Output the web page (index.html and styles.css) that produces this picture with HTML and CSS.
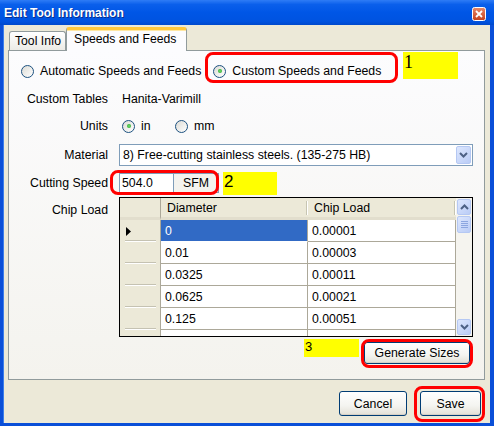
FILE: index.html
```html
<!DOCTYPE html>
<html lang="en">
<head>
    <meta charset="UTF-8">
    <title>Edit Tool Information</title>
    <link rel="stylesheet" href="styles.css">
</head>
<body>
    <div class="window">
        <div class="titlebar">
            <span class="title">Edit Tool Information</span>
            <svg class="close" width="14" height="14" viewBox="0 0 14 14">
                <defs>
                    <linearGradient id="closeBg" x1="0" y1="0" x2="0" y2="1">
                        <stop offset="0" stop-color="#E9896A"/>
                        <stop offset="1" stop-color="#C4401C"/>
                    </linearGradient>
                </defs>
                <rect x="0.5" y="0.5" width="13" height="13" rx="2" fill="url(#closeBg)" stroke="#fff"/>
                <path d="M4 4 L10 10 M10 4 L4 10" stroke="#fff" stroke-width="1.8"/>
            </svg>
        </div>

        <div class="client">
            <div class="tabs">
                <div class="tab">Tool Info</div>
                <div class="tab active">Speeds and Feeds</div>
            </div>

            <div class="panel">
                <div class="mode-row">
                    <label class="radio"><span class="dot"></span>Automatic Speeds and Feeds</label>
                    <label class="radio checked custom"><span class="dot"></span>Custom Speeds and Feeds</label>
                </div>

                <div class="row row-tables">
                    <div class="label">Custom Tables</div>
                    <div class="value text">Hanita-Varimill</div>
                </div>

                <div class="row row-units">
                    <div class="label">Units</div>
                    <div class="value text">
                        <label class="radio checked unit-in"><span class="dot"></span>in</label>
                        <label class="radio"><span class="dot"></span>mm</label>
                    </div>
                </div>

                <div class="row row-material">
                    <div class="label">Material</div>
                    <div class="value">
                        <div class="combo">
                            <span class="combo-text">8) Free-cutting stainless steels. (135-275 HB)</span>
                            <span class="xp-btn combo-btn">
                                <svg width="9" height="6" viewBox="0 0 9 6"><path d="M1 1 L4.5 4.5 L8 1" fill="none" stroke="#4D6185" stroke-width="2"/></svg>
                            </span>
                        </div>
                    </div>
                </div>

                <div class="row row-speed">
                    <div class="label">Cutting Speed</div>
                    <div class="value">
                        <span class="input">504.0</span>
                        <span class="unit">SFM</span>
                    </div>
                </div>

                <div class="row row-grid">
                    <div class="label">Chip Load</div>
                    <div class="value">
                        <div class="grid">
                            <div class="grid-cells">
                                <div class="hcell corner"></div>
                                <div class="hcell">Diameter</div>
                                <div class="hcell">Chip Load</div>

                                <div class="rcell current">
                                    <svg width="5" height="9" viewBox="0 0 5 9"><path d="M0 0 L5 4.5 L0 9 Z" fill="#000"/></svg>
                                </div>
                                <div class="cell selected">0</div>
                                <div class="cell">0.00001</div>

                                <div class="rcell"></div>
                                <div class="cell">0.01</div>
                                <div class="cell">0.00003</div>

                                <div class="rcell"></div>
                                <div class="cell">0.0325</div>
                                <div class="cell">0.00011</div>

                                <div class="rcell"></div>
                                <div class="cell">0.0625</div>
                                <div class="cell">0.00021</div>

                                <div class="rcell"></div>
                                <div class="cell">0.125</div>
                                <div class="cell">0.00051</div>

                                <div class="rcell"></div>
                                <div class="cell"></div>
                                <div class="cell"></div>
                            </div>
                            <div class="scrollbar">
                                <span class="xp-btn sb-btn">
                                    <svg width="9" height="6" viewBox="0 0 9 6"><path d="M1 5 L4.5 1.5 L8 5" fill="none" stroke="#4D6185" stroke-width="2"/></svg>
                                </span>
                                <span class="xp-btn sb-thumb">
                                    <svg width="7" height="7" viewBox="0 0 7 7"><path d="M0 0.5 H7 M0 2.5 H7 M0 4.5 H7 M0 6.5 H7" stroke="#8CA6E0" stroke-width="1"/></svg>
                                </span>
                                <span class="sb-track"></span>
                                <span class="xp-btn sb-btn">
                                    <svg width="9" height="6" viewBox="0 0 9 6"><path d="M1 1 L4.5 4.5 L8 1" fill="none" stroke="#4D6185" stroke-width="2"/></svg>
                                </span>
                            </div>
                        </div>
                    </div>
                </div>

                <div class="gen-row">
                    <button class="button gen">Generate Sizes</button>
                </div>
            </div>

            <div class="footer">
                <button class="button cancel">Cancel</button>
                <button class="button save">Save</button>
            </div>
        </div>

        <!-- annotations drawn over the dialog -->
        <div class="mark ring ring-1"></div>
        <div class="mark ring ring-2"></div>
        <div class="mark ring ring-3"></div>
        <div class="mark ring ring-4"></div>
        <div class="mark note note-1">1</div>
        <div class="mark note note-2">2</div>
        <div class="mark note note-3">3</div>
    </div>
</body>
</html>
```

FILE: styles.css
```css
body { margin: 0; font-family: "Liberation Sans", Arial, sans-serif; font-size: 12.3px; color: #000; }

.window { position: relative; width: 494px; height: 426px; box-sizing: border-box; display: flex; flex-direction: column; background: #0A4FD8; }

.titlebar { height: 25px; flex: none; display: flex; align-items: center; justify-content: space-between; padding: 0 8px 0 4px; background: linear-gradient(#2E7CF6 0%, #0A5FEB 18%, #0056E6 50%, #0053E0 85%, #0049CC 100%); }
.title { color: #fff; font-weight: bold; font-size: 12px; text-shadow: 1px 1px 0 #0A2E8C; }
.close { display: block; margin-top: 3px; }

.client { flex: 1; margin: 0 4px 3px 3px; background: #ECE9D8; display: flex; flex-direction: column; padding: 0 5px 0 4px; border-left: 1px solid #3C7EEB; }

.tabs { height: 25px; display: flex; align-items: flex-end; padding-left: 1px; position: relative; z-index: 1; font-size: 12.2px; }
.tab { height: 19px; box-sizing: border-box; width: 57px; padding: 0 0 1px 5px; display: flex; align-items: center; border: 1px solid #919B9C; border-bottom: none; border-radius: 3px 3px 0 0; background: linear-gradient(#FFFFFF, #ECEBE6); }
.tab.active { height: 24px; width: 121px; margin-bottom: -1px; padding: 0 0 3px 7px; border-top: 3px solid #FFC83C; box-shadow: inset 0 1px 0 #FFE7A2; background: #FCFCFE; }

.panel { height: 330px; box-sizing: border-box; border: 1px solid #919B9C; background: linear-gradient(#FCFCFE, #F4F3EE); padding: 10px 11px 0 0; display: flex; flex-direction: column; }

.mode-row { height: 20px; display: flex; align-items: center; padding-left: 12px; }
.radio { display: inline-flex; align-items: center; gap: 6px; white-space: nowrap; }
.radio .dot { width: 13px; height: 13px; box-sizing: border-box; border-radius: 50%; border: 1px solid #1C5180; background: linear-gradient(135deg, #DCDBD5, #FFFFFF); display: flex; align-items: center; justify-content: center; }
.radio.checked .dot::after { content: ""; width: 4px; height: 4px; border-radius: 50%; background: radial-gradient(#6FE06F, #1E9B1E); }
.radio.custom { margin-left: 12px; }

.row { display: flex; }
.label { width: 99px; flex: none; text-align: right; margin-right: 11px; }
.value { flex: 1; display: flex; align-items: center; }
.value.text { padding-left: 3px; }

.row-tables { height: 20px; margin-top: 8px; align-items: center; }
.row-units { height: 20px; margin-top: 7px; align-items: center; }
.unit-in { width: 53px; }
.row-material { height: 22px; margin-top: 8px; align-items: center; }
.row-speed { height: 20px; margin-top: 7px; align-items: center; }
.row-grid { height: 140px; margin-top: 4px; }
.row-grid .label { padding-top: 6px; }
.row-grid .value { align-items: stretch; }

.combo { flex: 1; height: 22px; box-sizing: border-box; border: 1px solid #7F9DB9; background: #fff; display: flex; align-items: center; justify-content: space-between; padding: 0 1px 0 3px; }

.xp-btn { display: flex; align-items: center; justify-content: center; box-sizing: border-box; border: 1px solid #B5C8F3; border-radius: 2px; background: linear-gradient(135deg, #DDE7FE, #BACCF6); }
.combo-btn { width: 15px; height: 18px; }

.input { width: 55px; height: 20px; box-sizing: border-box; border: 1px solid #7F9DB9; background: #fff; padding-left: 2px; display: flex; align-items: center; }
.unit { width: 45px; height: 20px; box-sizing: border-box; border: 1px solid #7F9DB9; border-left: none; background: #F4F3EE; display: flex; align-items: center; justify-content: center; }

.grid { flex: 1; display: flex; border: 1px solid #000; background: #fff; overflow: hidden; }
.grid-cells { flex: 1; display: grid; grid-template-columns: 41px 147px 1fr; grid-auto-rows: 22px; align-content: start; }
.hcell { height: 22px; box-sizing: border-box; display: flex; align-items: center; padding-left: 6px; background: #ECE9D8; border-bottom: 3px solid #E2DECD; background-image: linear-gradient(#C7C5B2, #C7C5B2), linear-gradient(#fff, #fff); background-size: 1px 14px, 1px 14px; background-position: right 1px center, right 0 center; background-repeat: no-repeat; }
.hcell.corner { border-right: 1px solid #ACA899; background-image: none; }
.rcell { box-sizing: border-box; border-right: 1px solid #ACA899; padding-left: 6px; display: flex; align-items: center; background: linear-gradient(#C5C2B2, #C5C2B2) 5px calc(100% - 1px) / 31px 1px no-repeat, linear-gradient(#fff, #fff) 5px 100% / 31px 1px no-repeat, #ECE9D8; }
.cell { box-sizing: border-box; border-right: 1px solid #ACA899; border-bottom: 1px solid #ACA899; padding-left: 4px; display: flex; align-items: center; }
.cell.selected { background: #316AC5; color: #fff; border-bottom-color: #fff; }

.scrollbar { width: 16px; flex: none; display: flex; flex-direction: column; padding: 1px; box-sizing: border-box; background: #F5F4EF; gap: 1px; }
.sb-btn { height: 16px; }
.sb-thumb { height: 17px; }
.sb-track { flex: 1; }

.gen-row { display: flex; justify-content: flex-end; margin-top: 5px; padding-right: 3px; }

.button { height: 25px; box-sizing: border-box; border: 1px solid #003C74; border-radius: 3px; background: linear-gradient(#FFFFFF 0%, #F4F4F0 60%, #E3E0D6 100%); box-shadow: inset 0 -1px 0 #D6D0C5; font: inherit; color: #000; padding: 0; }
.gen { width: 106px; height: 22px; }

.footer { flex: 1; display: flex; justify-content: flex-end; align-items: flex-start; gap: 13px; padding: 11px 4px 0 0; }
.cancel { width: 68px; }
.save { width: 61px; }

.mark { position: absolute; box-sizing: border-box; }
.ring { border: 3px solid #FF0000; border-radius: 8px; }
.ring-1 { left: 205px; top: 52px; width: 193px; height: 31px; }
.ring-2 { left: 110px; top: 170px; width: 109px; height: 25px; }
.ring-3 { left: 361px; top: 339px; width: 112px; height: 29px; }
.ring-4 { left: 414px; top: 386px; width: 71px; height: 36px; }
.note { background: #FFFF00; line-height: 1; padding: 1px 0 0 1px; }
.note-1 { left: 403px; top: 52px; width: 55px; height: 27px; font-family: "Liberation Serif", serif; font-size: 18px; }
.note-2 { left: 223px; top: 172px; width: 54px; height: 23px; font-size: 17px; }
.note-3 { left: 304px; top: 339px; width: 55px; height: 18px; font-size: 13px; }
```
